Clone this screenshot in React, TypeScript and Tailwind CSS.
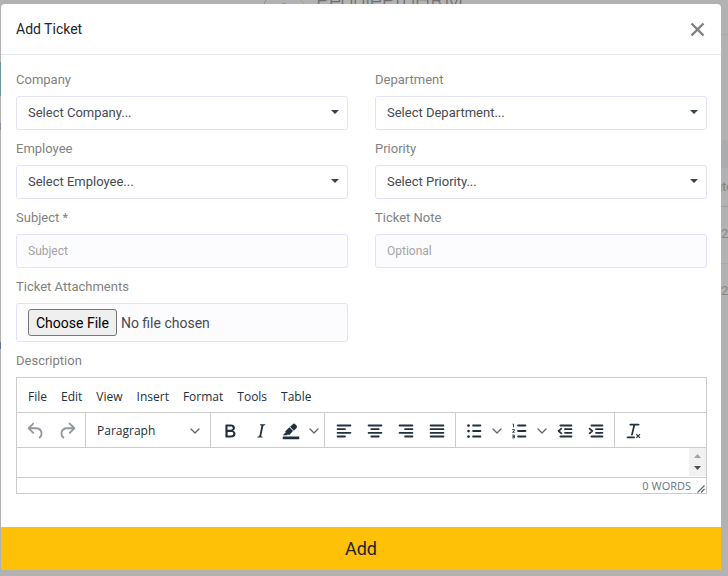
import React, { useState } from "react";

const ROBOTO = "font-['Roboto','Liberation_Sans',sans-serif]";
const EDITOR_FONT = "font-['Open_Sans','Noto_Sans',sans-serif]";

function Label({ htmlFor, children }: { htmlFor: string; children: React.ReactNode }) {
  return (
    <label htmlFor={htmlFor} className="mb-1 block text-[13px] leading-6 text-[#828282]">
      {children}
    </label>
  );
}

function SelectField({ id, label, placeholder }: { id: string; label: string; placeholder: string }) {
  return (
    <div>
      <Label htmlFor={id}>{label}</Label>
      <div className="relative">
        <select
          id={id}
          className="block h-[34px] w-full appearance-none rounded-[3px] border border-[#e2e2fb] bg-white px-[11px] text-[13px] text-[#464a53] outline-none"
        >
          <option>{placeholder}</option>
        </select>
        <svg className="pointer-events-none absolute right-[9px] top-[14px] h-1 w-2" viewBox="0 0 8 4" fill="#3b414d">
          <path d="M0 0h8L4 4z" />
        </svg>
      </div>
    </div>
  );
}

function TextField({ id, label, placeholder }: { id: string; label: string; placeholder: string }) {
  return (
    <div>
      <Label htmlFor={id}>{label}</Label>
      <input
        id={id}
        type="text"
        placeholder={placeholder}
        className="block h-[34px] w-full rounded-[3px] border border-[#e2e2fb] bg-[#fcfcff] px-[11px] text-[12px] text-[#464a53] outline-none placeholder:text-[#a3a3a3]"
      />
    </div>
  );
}

function Icon({ children }: { children: React.ReactNode }) {
  return (
    <svg className="size-[22px]" viewBox="0 0 24 24" fill="currentColor" aria-hidden="true">
      {children}
    </svg>
  );
}

function Chevron() {
  return (
    <svg className="h-[6px] w-[10px]" viewBox="0 0 10 6" fill="none" stroke="#5d6775" strokeWidth="1.3" strokeLinecap="round" strokeLinejoin="round" aria-hidden="true">
      <path d="M1 1l4 4 4-4" />
    </svg>
  );
}

function ToolButton({ label, disabled, children }: { label: string; disabled?: boolean; children: React.ReactNode }) {
  return (
    <button
      type="button"
      aria-label={label}
      disabled={disabled}
      className="flex h-[31px] w-[31px] items-center justify-center text-[#222f3e] disabled:text-[#222f3e]/50"
    >
      <Icon>{children}</Icon>
    </button>
  );
}

function SplitButton({ label, children }: { label: string; children: React.ReactNode }) {
  return (
    <div className="flex">
      <button type="button" aria-label={label} className="flex h-[31px] w-[30px] items-center justify-center text-[#222f3e]">
        <Icon>{children}</Icon>
      </button>
      <button type="button" aria-label={`${label} options`} className="flex h-[31px] w-[15px] items-center justify-center">
        <Chevron />
      </button>
    </div>
  );
}

function Group({ children, last }: { children: React.ReactNode; last?: boolean }) {
  return (
    <div className={last ? "flex items-center px-[3px] pt-0.5" : "flex items-center border-r border-[#cccccc] px-[3px] pt-0.5"}>
      {children}
    </div>
  );
}

const bar = (x: number, y: number, w: number) => <rect key={`${x}-${y}`} x={x} y={y} width={w} height="2" rx="1" />;

function Toolbar() {
  return (
    <div className="flex h-[35px] border-b border-[#cccccc]">
      <Group>
        <ToolButton label="Undo" disabled>
          <path d="M6.4 8H12c3.7 0 6.2 2 6.8 5.1.6 2.7-.4 5.6-2.3 6.8a1 1 0 0 1-1-1.8c1.1-.6 1.8-2.7 1.4-4.6-.5-2.1-2.1-3.5-4.9-3.5H6.4l3.3 3.3a1 1 0 1 1-1.4 1.4l-5-5a1 1 0 0 1 0-1.4l5-5a1 1 0 0 1 1.4 1.4L6.4 8z" />
        </ToolButton>
        <ToolButton label="Redo" disabled>
          <path d="M17.6 10H12c-2.8 0-4.4 1.4-4.9 3.5-.4 2 .3 4 1.4 4.6a1 1 0 1 1-1 1.8c-2-1.2-2.9-4.1-2.3-6.8.6-3 3-5.1 6.8-5.1h5.6l-3.3-3.3a1 1 0 1 1 1.4-1.4l5 5a1 1 0 0 1 0 1.4l-5 5a1 1 0 0 1-1.4-1.4l3.3-3.3z" />
        </ToolButton>
      </Group>
      <Group>
        <div className="relative">
          <select aria-label="Block format" className="h-[31px] w-[118px] appearance-none bg-transparent px-2 text-[12px] text-[#222f3e] outline-none">
            <option>Paragraph</option>
          </select>
          <span className="pointer-events-none absolute inset-y-0 right-[7px] flex items-center">
            <Chevron />
          </span>
        </div>
      </Group>
      <Group>
        <ToolButton label="Bold">
          <path d="M7.8 19c-.3 0-.5 0-.6-.2l-.2-.5V5.7c0-.2 0-.4.2-.5l.6-.2h5c1.5 0 2.7.3 3.5 1 .7.6 1.1 1.4 1.1 2.5a3 3 0 0 1-.6 1.9c-.4.6-1 1-1.6 1.2.4.1.9.3 1.3.6s.8.7 1 1.2c.4.4.5 1 .5 1.6 0 1.3-.4 2.3-1.3 3-.8.7-2.1 1-3.8 1H7.8zm5-8.3c.6 0 1.2-.1 1.6-.5.4-.3.6-.7.6-1.3 0-1.1-.8-1.7-2.3-1.7H9.3v3.5h3.4zm.5 6c.7 0 1.3-.1 1.7-.4.4-.4.6-.9.6-1.5s-.2-1-.7-1.4c-.4-.3-1-.4-2-.4H9.4v3.8h4z" />
        </ToolButton>
        <ToolButton label="Italic">
          <path d="M16.7 4.7l-.1.9h-.3c-.6 0-1 0-1.4.3-.3.3-.4.6-.5 1.1l-2.1 9.8v.6c0 .5.4.8 1.4.8h.2l-.2.8H8l.2-.8h.2c1.1 0 1.8-.5 2-1.5l2-9.8.1-.5c0-.6-.4-.8-1.4-.8h-.3l.2-.9h5.8z" />
        </ToolButton>
        <SplitButton label="Background color">
          <path d="M3 18h18v3H3z" />
          <path d="M7.7 16.7H3l3.3-3.3-.7-.8L10.2 8l4 4.1-4 4.2c-.2.2-.6.2-.8 0l-.6-.7-1.1 1.1zm5-7.5L11 7.4l3-2.9a2 2 0 0 1 2.6 0L18 6c.7.7.7 2 0 2.7l-2.9 2.9-1.8-1.8-.5-.6" />
        </SplitButton>
      </Group>
      <Group>
        <ToolButton label="Align left">{[bar(4, 5, 16), bar(4, 9, 10), bar(4, 13, 16), bar(4, 17, 10)]}</ToolButton>
        <ToolButton label="Align center">{[bar(4, 5, 16), bar(7, 9, 10), bar(4, 13, 16), bar(7, 17, 10)]}</ToolButton>
        <ToolButton label="Align right">{[bar(4, 5, 16), bar(10, 9, 10), bar(4, 13, 16), bar(10, 17, 10)]}</ToolButton>
        <ToolButton label="Justify">{[bar(4, 5, 16), bar(4, 9, 16), bar(4, 13, 16), bar(4, 17, 16)]}</ToolButton>
      </Group>
      <Group>
        <SplitButton label="Bullet list">
          {[bar(10, 5, 10), bar(10, 11, 10), bar(10, 17, 10)]}
          <circle cx="6" cy="6" r="1.5" />
          <circle cx="6" cy="12" r="1.5" />
          <circle cx="6" cy="18" r="1.5" />
        </SplitButton>
        <SplitButton label="Numbered list">
          {[bar(10, 5, 10), bar(10, 11, 10), bar(10, 17, 10)]}
          <g fill="none" stroke="currentColor" strokeWidth="1">
            <path d="M5 4.5h1V8" />
            <path d="M4.5 10.5H7v1.2L5 13.4h2.3" />
            <path d="M4.5 16.5H7v3H4.5M5 18h2" />
          </g>
        </SplitButton>
        <ToolButton label="Decrease indent">
          {[bar(6, 5, 14), bar(11, 9, 9), bar(11, 13, 9), bar(6, 17, 14)]}
          <path d="M8 9.5L5 12l3 2.5" fill="none" stroke="currentColor" strokeWidth="1.8" strokeLinecap="round" strokeLinejoin="round" />
        </ToolButton>
        <ToolButton label="Increase indent">
          {[bar(6, 5, 14), bar(11, 9, 9), bar(11, 13, 9), bar(6, 17, 14)]}
          <path d="M5 9.5L8 12l-3 2.5" fill="none" stroke="currentColor" strokeWidth="1.8" strokeLinecap="round" strokeLinejoin="round" />
        </ToolButton>
      </Group>
      <Group last>
        <ToolButton label="Clear formatting">
          <path d="M13.2 6l-2.6 10.7H8.7L11.2 6H8a1 1 0 1 1 0-2h9a1 1 0 0 1 0 2h-3.8zM5 18h7a1 1 0 0 1 0 2H5a1 1 0 0 1 0-2zm13.1 2l-1.6-1.6-1.6 1.6-.9-.9 1.6-1.6-1.6-1.6.9-.9 1.6 1.6 1.6-1.6.9.9-1.6 1.6 1.6 1.6-.9.9z" />
        </ToolButton>
      </Group>
    </div>
  );
}

function Editor() {
  return (
    <div className={`border border-[#cccccc] bg-white ${EDITOR_FONT}`}>
      <div className="flex h-[35px] items-center gap-[14px] border-b border-[#cccccc] px-[11px] pt-1 text-[12px] text-[#222f3e]">
        {["File", "Edit", "View", "Insert", "Format", "Tools", "Table"].map((item) => (
          <button key={item} type="button">
            {item}
          </button>
        ))}
      </div>
      <Toolbar />
      <div className="flex h-[30px] border-b border-[#cccccc]">
        <textarea id="description" className="min-w-0 flex-1 resize-none px-3 py-1 text-[12px] outline-none" />
        <div className="mb-px flex w-[17px] flex-col items-center justify-between bg-[#f1f1f1] px-[5px] py-[6px]">
          <svg className="h-1 w-[7px]" viewBox="0 0 7 4" fill="#a3a3a3" aria-hidden="true">
            <path d="M0 4h7L3.5 0z" />
          </svg>
          <svg className="h-1 w-[7px]" viewBox="0 0 7 4" fill="#505050" aria-hidden="true">
            <path d="M0 0h7L3.5 4z" />
          </svg>
        </div>
      </div>
      <div className="flex h-[15px] items-center justify-end gap-1.5 pr-px text-[11px] leading-[15px] text-[#6b7480]">
        <span>0 WORDS</span>
        <svg className="size-2 self-end" viewBox="0 0 8 8" fill="none" stroke="#5d6775" strokeWidth="1.2" aria-hidden="true">
          <path d="M0.5 7.5l7-7M4 7.5l3.5-3.5" />
        </svg>
      </div>
    </div>
  );
}

export default function App() {
  const [open] = useState(true);
  return (
    <div className={`relative min-h-screen overflow-hidden bg-[#b2b2b2] pb-1.5 pl-px pr-[7px] pt-1 ${ROBOTO}`}>
      <div className="absolute inset-0 text-[#868686]" aria-hidden="true">
        <svg className="absolute left-[262px] top-0 h-1 w-[46px]" viewBox="0 0 46 4" fill="none" strokeWidth="1">
          <path d="M4 0L2 4" stroke="#b07c80" />
          <path d="M20 4h4" stroke="#6f9c98" strokeWidth="1.5" />
          <path d="M39 0l3 4" stroke="#b5a468" />
        </svg>
        <div className="absolute left-[316px] top-[-11px] text-[22px] font-light leading-6 text-[#707070]">PeopleProHRM</div>
        <div className="absolute right-0 top-[34px] h-px w-2 bg-[#a9a9a9]" />
        <div className="absolute right-0 top-[140px] h-7 w-2 bg-[#abacae]" />
        <div className="absolute left-[715px] top-[177px] text-[13px] font-medium leading-5">ate</div>
        <div className="absolute right-0 top-[206px] h-px w-2 bg-[#a0a0a0]" />
        <div className="absolute left-[721px] top-[224px] text-[13px] leading-5">2</div>
        <div className="absolute right-0 top-[263px] h-px w-2 bg-[#a9a9a9]" />
        <div className="absolute left-[721px] top-[281px] text-[13px] leading-5">2</div>
        <div className="absolute left-0 top-[62px] h-[34px] w-px bg-[#6d979e]" />
        <div className="absolute left-0 top-[123px] h-[7px] w-px bg-[#8592a8]" />
        <div className="absolute left-0 top-[342px] h-[7px] w-px bg-[#5f7796]" />
      </div>
      {open && (
        <form role="dialog" aria-label="Add Ticket" className="relative overflow-hidden rounded-t bg-white" onSubmit={(e) => e.preventDefault()}>
          <header className="flex h-[51px] items-center justify-between border-b border-[#e6e8ee] pl-[15px] pr-4">
            <h1 className="text-[14px] leading-5 text-[#212529]">Add Ticket</h1>
            <button type="button" aria-label="Close" className="text-[#7f7f7f]">
              <svg className="size-[15px]" viewBox="0 0 15 15" fill="none" stroke="currentColor" strokeWidth="2.4" aria-hidden="true">
                <path d="M1.5 1.5l12 12M13.5 1.5l-12 12" />
              </svg>
            </button>
          </header>
          <div className="pb-[33px] pl-[15px] pr-3.5 pt-[13px]">
            <div className="grid grid-cols-2 gap-x-[27px] gap-y-[7px]">
              <SelectField id="company" label="Company" placeholder="Select Company..." />
              <SelectField id="department" label="Department" placeholder="Select Department..." />
              <SelectField id="employee" label="Employee" placeholder="Select Employee..." />
              <SelectField id="priority" label="Priority" placeholder="Select Priority..." />
              <TextField id="subject" label="Subject *" placeholder="Subject" />
              <TextField id="note" label="Ticket Note" placeholder="Optional" />
              <div>
                <Label htmlFor="attachments">Ticket Attachments</Label>
                <input
                  id="attachments"
                  type="file"
                  className="block h-[39px] w-full rounded-[3px] border border-[#e2e2fb] bg-[#fcfcff] px-[11px] py-[5px] text-[14px] leading-5 text-[#464a53] file:mr-1 file:h-[27px] file:rounded-[3px] file:border file:border-solid file:border-[#767676] file:bg-[#efefef] file:px-[7px] file:text-black"
                />
              </div>
              <div className="col-span-2">
                <Label htmlFor="description">Description</Label>
                <Editor />
              </div>
            </div>
          </div>
          <button type="submit" className="block h-[43px] w-full bg-[#ffc107] text-[18px] text-[#212529]">
            Add
          </button>
        </form>
      )}
    </div>
  );
}
